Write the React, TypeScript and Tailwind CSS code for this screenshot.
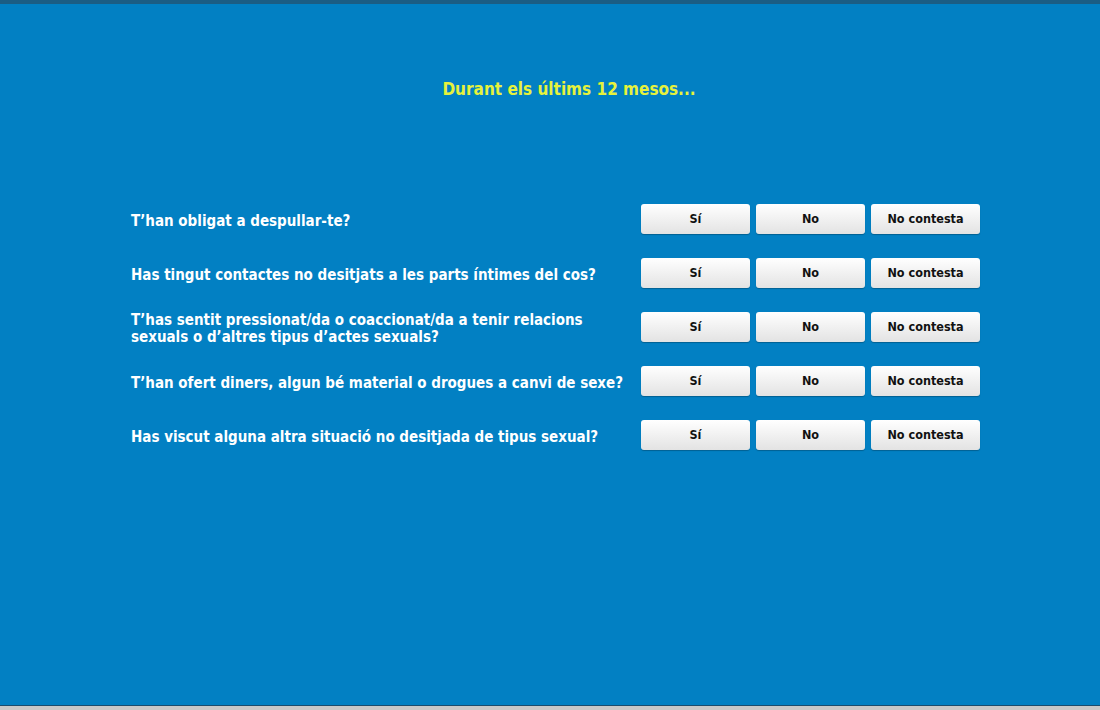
import React from 'react';

const questions: string[][] = [
  ['T’han obligat a despullar-te?'],
  ['Has tingut contactes no desitjats a les parts íntimes del cos?'],
  ['T’has sentit pressionat/da o coaccionat/da a tenir relacions', 'sexuals o d’altres tipus d’actes sexuals?'],
  ['T’han ofert diners, algun bé material o drogues a canvi de sexe?'],
  ['Has viscut alguna altra situació no desitjada de tipus sexual?'],
];

const options = ['Sí', 'No', 'No contesta'];

const font = { fontFamily: '"DejaVu Sans Condensed", "DejaVu Sans", sans-serif' };

export default function App() {
  return (
    <div className="w-[1100px] h-[710px] flex flex-col bg-[#0280c3] overflow-hidden" style={font}>
      <div className="h-[4px] bg-[#1b5d84] shrink-0" />
      <div className="flex-1 flex flex-col">
        <h1 className="mt-[73px] text-center text-[17px] font-bold text-[#e6f23c] pl-[38px]">Durant els últims 12 mesos...</h1>
        <div className="mt-[101px] flex flex-col gap-[24px] pl-[131px]">
          {questions.map((q, i) => (
            <div key={i} className="flex items-center h-[30px]">
              <p className="w-[510px] pt-[5px] text-[15px] font-bold text-white leading-[17px]">
                {q.map((l, j) => <span key={j} className="block">{l}</span>)}
              </p>
              <div className="flex gap-[6px]">
                {options.map(o => (
                  <button key={o} className="w-[109px] h-[30px] pt-[2px] rounded-[3px] bg-gradient-to-b from-white to-[#e3e3e3] text-[12.5px] font-bold text-[#111] shadow-[0_1px_1px_rgba(0,0,0,0.25)]">{o}</button>
                ))}
              </div>
            </div>
          ))}
        </div>
      </div>
      <div className="h-[1px] bg-[#1b4d6e] shrink-0" />
      <div className="h-[4px] bg-[#c8c8c8] shrink-0" />
    </div>
  );
}
